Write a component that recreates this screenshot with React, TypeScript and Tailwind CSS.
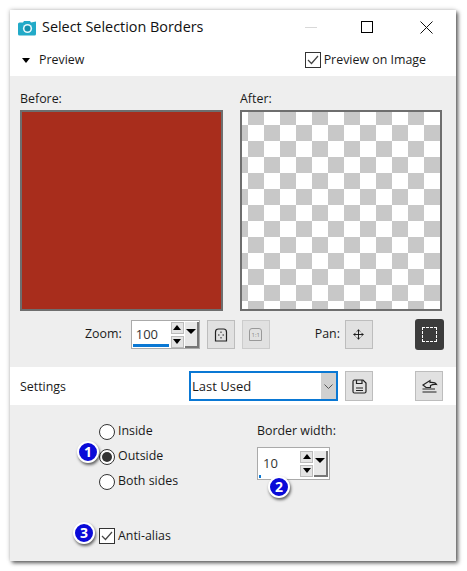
import { Move } from 'lucide-react';

const font = 'font-["Open_Sans","Noto_Sans",sans-serif]';

function Badge({ n, className }: { n: number; className: string }) {
  return (
    <div
      className={`absolute flex h-[22px] w-[22px] items-center justify-center rounded-full border-2 border-white bg-[#0a0ad8] text-[14px] font-bold leading-none text-white shadow-[1px_2px_3px_rgba(0,0,0,0.6)] ${className}`}
    >
      {n}
    </div>
  );
}

function Checkbox() {
  return (
    <div className="flex h-[16px] w-[16px] shrink-0 items-center justify-center border border-[#333] bg-white">
      <svg width="12" height="10" viewBox="0 0 12 10" fill="none" stroke="#444" strokeWidth="1.2">
        <path d="M1 5 L4.5 8.5 L11 1" />
      </svg>
    </div>
  );
}

function Radio({ label, checked }: { label: string; checked?: boolean }) {
  return (
    <div className="flex h-[25px] items-center gap-[3px]">
      <div className="flex h-[16px] w-[16px] items-center justify-center rounded-full border border-[#333] bg-white">
        {checked && <div className="h-[10px] w-[10px] rounded-full bg-[#333]" />}
      </div>
      <span>{label}</span>
    </div>
  );
}

// spin arrows + the small dropdown button next to numeric inputs
function Spinner() {
  return (
    <div className="flex items-center gap-[1px]">
      <div className="flex flex-col gap-[2px]">
        <div className="flex h-[12px] w-[13px] items-center justify-center border border-[#bbb] bg-[#e4e4e4]">
          <div className="h-0 w-0 border-x-[4px] border-b-[5px] border-x-transparent border-b-black" />
        </div>
        <div className="flex h-[12px] w-[13px] items-center justify-center border border-[#bbb] bg-[#e4e4e4]">
          <div className="h-0 w-0 border-x-[4px] border-t-[5px] border-x-transparent border-t-black" />
        </div>
      </div>
      <div className="flex h-[26px] w-[14px] justify-center border-r-2 border-b-2 border-[#777] bg-[#e8e8e8] pt-[7px]">
        <div className="h-0 w-0 border-x-[5px] border-t-[5px] border-x-transparent border-t-black" />
      </div>
    </div>
  );
}

function ToolButton({ children, className = '' }: { children: React.ReactNode; className?: string }) {
  return (
    <div className={`flex h-[29px] w-[28px] items-center justify-center border border-[#bdbdbd] bg-[#e1e1e1] ${className}`}>
      {children}
    </div>
  );
}

export default function App() {
  return (
    <div className={`h-[571px] w-[467px] bg-white pl-[10px] pt-[10px] text-[12.4px] leading-none text-[#1a1a1a] ${font}`}>
      <div className="relative flex h-[551px] w-[446px] flex-col bg-[#eeeeee] shadow-[2px_2px_4px_rgba(0,0,0,0.65),-1px_-1px_4px_rgba(0,0,0,0.12)]">
        {/* Title bar */}
        <div className="flex h-[34px] items-center bg-white pl-[8px]">
          <svg width="19" height="16" viewBox="0 0 19 16" className="mt-[1px]">
            <path d="M0 4 Q0 2.5 1.5 2.5 L5 2.5 L6 1 L12 1 L13 2.5 L18 1.5 L18 14 Q18 15.5 16.5 15.5 L1.5 15.5 Q0 15.5 0 14 Z" fill="#22aac8" />
            <circle cx="9.5" cy="8.5" r="4.6" fill="#e8f8fb" />
            <circle cx="9.5" cy="8.5" r="3" fill="#1590ad" />
          </svg>
          <span className="ml-[5px] text-[14.4px] text-[#111]">Select Selection Borders</span>
          <div className="ml-auto flex items-center pr-[23px]">
            <div className="mr-[44px] h-px w-[12px] bg-[#d8d8d8]" />
            <div className="h-[12px] w-[12px] border border-black" />
            <svg width="13" height="13" viewBox="0 0 13 13" className="ml-[47px]" stroke="#111" strokeWidth="1">
              <path d="M0.5 0.5 L12.5 12.5 M12.5 0.5 L0.5 12.5" />
            </svg>
          </div>
        </div>

        {/* Preview header */}
        <div className="flex h-[32px] items-center bg-white pl-[12px] pr-[30px]">
          <div className="h-0 w-0 border-x-[4px] border-t-[5px] border-x-transparent border-t-black" />
          <span className="ml-[9px]">Preview</span>
          <div className="ml-auto flex items-center gap-[3px]">
            <Checkbox />
            <span>Preview on Image</span>
          </div>
        </div>

        {/* Before / After */}
        <div className="flex gap-[17px] pl-[10px] pt-[17px]">
          <div className="w-[203px]">
            <div className="mb-[6px] h-[11px]">Before:</div>
            <div className="h-[201px] border-2 border-[#6e6e6e] bg-[#a82d1c]" />
          </div>
          <div className="w-[202px]">
            <div className="mb-[6px] h-[11px]">After:</div>
            <div className="h-[201px] border-2 border-[#6e6e6e] bg-[conic-gradient(#fff_25%,#c8c8c8_0_50%,#fff_0_75%,#c8c8c8_0)] bg-[length:32px_32px] bg-[position:6px_-3px]" />
          </div>
        </div>

        {/* Zoom and pan */}
        <div className="flex items-center pl-[75px] pt-[8px]">
          <span>Zoom:</span>
          <div className="ml-[9px] mr-[7px] flex h-[29px] w-[69px] items-center border border-[#aaa] bg-white pl-[1px]">
            <div className="relative mr-[2px] flex h-full w-[36px] items-center pl-[3px] text-[13px] text-[#333]">
              100
              <div className="absolute bottom-[1px] left-0 h-[3px] w-[36px] bg-[#0a78d4]" />
            </div>
            <Spinner />
          </div>
          <ToolButton>
            <svg width="16" height="16" viewBox="0 0 16 16" fill="none" stroke="#222">
              <path d="M2.5 14 V5 Q2.5 2 5.5 2 H10.5 Q13.5 2 13.5 5 V14 Z" strokeWidth="1.2" />
              <path d="M8 4.5v1.5M8 10v1.5M5 8h1.5M9.5 8h1.5" />
            </svg>
          </ToolButton>
          <ToolButton className="ml-[7px] border-[#ccc] bg-[#cfcfcf]">
            <div className="flex h-[13px] w-[13px] items-center justify-center rounded-t-[3px] border border-[#999] text-[6px] text-[#888]">
              1:1
            </div>
          </ToolButton>
          <span className="ml-[45px]">Pan:</span>
          <ToolButton className="ml-[5px]">
            <Move size={11} color="#111" strokeWidth={2} />
          </ToolButton>
          <div className="ml-[42px] flex h-[31px] w-[29px] items-center justify-center rounded-[3px] bg-[#3c3c3c]">
            <div className="h-[15px] w-[15px] border border-dashed border-white" />
          </div>
        </div>

        {/* Settings row */}
        <div className="mt-[17px] flex h-[38px] items-center bg-white pl-[10px]">
          <span className="mt-[3px] w-[169px]">Settings</span>
          <div className="flex h-[30px] w-[149px] items-center justify-between border-2 border-[#0a78d4] pl-[1px] text-[13px]">
            Last Used
            <div className="flex h-full w-[15px] items-center justify-center bg-[#d0d0d0]">
              <svg width="9" height="5" viewBox="0 0 9 5" fill="none" stroke="#555">
                <path d="M0.5 0.5 L4.5 4.5 L8.5 0.5" />
              </svg>
            </div>
          </div>
          <ToolButton className="ml-[7px] h-[30px]">
            <svg width="15" height="15" viewBox="0 0 15 15" fill="none" stroke="#222" strokeWidth="1.2">
              <path d="M2.5 1 H11 L14 4 V12.5 Q14 14 12.5 14 H2.5 Q1 14 1 12.5 V2.5 Q1 1 2.5 1 Z" />
              <path d="M4.5 1 V4.5 H10 V1 M4 9 H11 M4 11.5 H11" />
            </svg>
          </ToolButton>
          <ToolButton className="ml-[42px] h-[30px]">
            <svg width="17" height="16" viewBox="0 0 17 16" fill="none" stroke="#222" strokeWidth="1.2">
              <path d="M2 7 L9 2.5 V4.5 Q14 4 15.5 6.5 Q12 6 9.5 7.5 V9.5 H5 Z" />
              <path d="M1.5 11 H14 M1.5 14 H15.5" />
            </svg>
          </ToolButton>
        </div>

        {/* Options */}
        <div className="flex pl-[89px] pt-[14px]">
          <div className="w-[158px]">
            <Radio label="Inside" />
            <Radio label="Outside" checked />
            <Radio label="Both sides" />
          </div>
          <div className="pt-[6px]">
            <div className="mb-[10px]">Border width:</div>
            <div className="flex h-[33px] w-[73px] items-center border border-[#aaa] bg-white pl-[1px]">
              <div className="relative mr-[4px] flex h-full w-[37px] items-center pl-[4px] text-[13px] text-[#333]">
                10
                <div className="absolute bottom-[1px] left-0 h-[3px] w-[2px] bg-[#0a78d4]" />
              </div>
              <Spinner />
            </div>
          </div>
        </div>
        <div className="flex items-center gap-[3px] pl-[89px] pt-[34px]">
          <Checkbox />
          <span>Anti-alias</span>
        </div>

        <Badge n={1} className="left-[67px] top-[431px]" />
        <Badge n={2} className="left-[258px] top-[466px]" />
        <Badge n={3} className="left-[63px] top-[512px]" />
      </div>
    </div>
  );
}
